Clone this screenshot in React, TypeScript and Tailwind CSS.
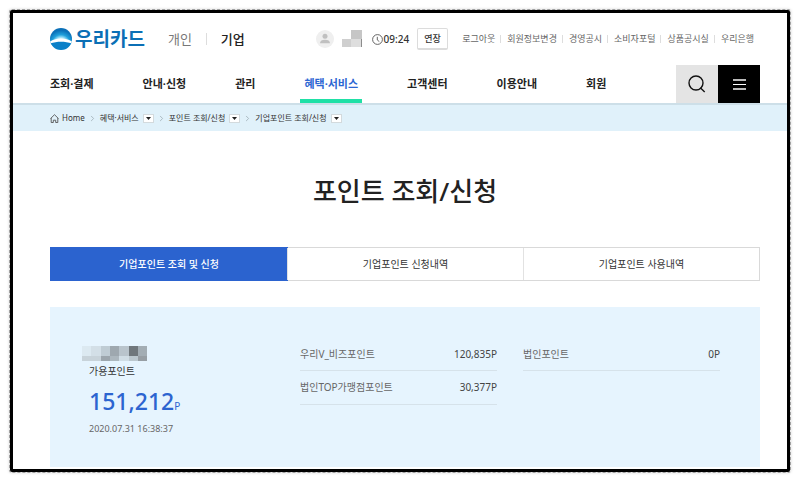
import { ChevronRight } from 'lucide-react';
import { clsx } from 'clsx';

const utilityLinks = ['로그아웃', '회원정보변경', '경영공시', '소비자포털', '상품공시실', '우리은행'];

const menus = ['조회·결제', '안내·신청', '관리', '혜택·서비스', '고객센터', '이용안내', '회원'];
const activeMenu = '혜택·서비스';

const crumbs = ['혜택·서비스', '포인트 조회/신청', '기업포인트 조회/신청'];

const tabs = ['기업포인트 조회 및 신청', '기업포인트 신청내역', '기업포인트 사용내역'];

const points = [
  [
    { name: '우리V_비즈포인트', value: '120,835P' },
    { name: '법인TOP가맹점포인트', value: '30,377P' },
  ],
  [{ name: '법인포인트', value: '0P' }],
];

// Masked company name, two rows of seven blocks
const maskRows = [
  ['#dce9f1', '#d3dfe7', '#bfccd4', '#9ea8af', '#b9c4cc', '#70777c', '#a3adb4'],
  ['#c8d3da', '#c8d3da', '#9ca6ad', '#acb7be', '#d0dde5', '#bcc8cf', '#979ea4'],
];

function Logo() {
  return (
    <a href="#" className="flex items-center gap-[3px]">
      <svg viewBox="0 0 22 22" className="size-[22px]" aria-hidden="true">
        <defs>
          <radialGradient id="sky" gradientUnits="userSpaceOnUse" cx="11" cy="16" r="16">
            <stop offset="0.25" stopColor="#ffffff" />
            <stop offset="0.4" stopColor="#a5e2f7" />
            <stop offset="0.58" stopColor="#1fa0dc" />
            <stop offset="0.85" stopColor="#0a70b8" />
          </radialGradient>
          <clipPath id="disc">
            <circle cx="11" cy="11" r="11" />
          </clipPath>
        </defs>
        <g clipPath="url(#disc)">
          <rect width="22" height="22" fill="url(#sky)" />
          <path d="M-1 15.6C3 13.4 7 12.9 11 12.9S19 13.4 23 15.6V23H-1z" fill="#0a80c8" />
          <path d="M0 13.4C4 11.2 7 10.4 11 10.4S18 11.2 22 13.4V15.6C18 14.2 15 13.8 11 13.8S4 14.2 0 15.6z" fill="#fff" />
        </g>
      </svg>
      <span className="text-[19px] leading-6 font-bold text-[#0b6fb5]">우리카드</span>
    </a>
  );
}

function Mask({ className }: { className?: string }) {
  return (
    <svg viewBox="0 0 65 15" className={className} shapeRendering="crispEdges" aria-hidden="true">
      {maskRows.map((row, y) =>
        row.map((color, x) => (
          <rect key={`${x}-${y}`} x={x * 9.3} y={y * 9.5} width="9.4" height={y ? 5.5 : 9.5} fill={color} />
        )),
      )}
    </svg>
  );
}

function TopBar() {
  return (
    <div className="flex h-[52px] items-center pr-[33px] pl-[37px]">
      <Logo />
      <div className="ml-[23px] flex items-center text-[13px] leading-5">
        <a href="#" className="text-[#777]">개인</a>
        <span className="mx-3.5 h-3 w-px bg-[#ddd]" />
        <a href="#" className="font-medium text-[#222]">기업</a>
      </div>
      <div className="ml-auto flex items-center">
        <svg viewBox="0 0 18 18" className="size-[18px]" aria-hidden="true">
          <circle cx="9" cy="9" r="9" fill="#efefef" />
          <circle cx="9" cy="6.3" r="2.5" fill="#c0c0c0" />
          <path d="M4 13.3C4 10.7 6 9.7 9 9.7s5 1 5 3.6z" fill="#c0c0c0" />
        </svg>
        <svg viewBox="0 0 20 18" className="ml-2 h-[18px] w-5" shapeRendering="crispEdges" aria-hidden="true">
          <rect x="9" y="0" width="11" height="9" fill="#c6c6c6" />
          <rect x="0" y="9" width="9" height="8" fill="#cfcfcf" />
          <rect x="9" y="9" width="10" height="8" fill="#dedede" />
          <rect x="19" y="9" width="1" height="8" fill="#8c8c8c" />
        </svg>
        <svg viewBox="0 0 11 11" className="ml-2.5 size-[11px]" fill="none" stroke="#555" strokeWidth="0.9" aria-hidden="true">
          <circle cx="5.5" cy="5.5" r="4.9" />
          <path d="M5.3 2.8V6l2 1.6" />
        </svg>
        <span className="ml-px text-[10px] leading-4 font-medium text-[#333]">09:24</span>
        <button className="ml-2 h-[22px] w-[31px] rounded-xs border border-b-2 border-[#dcdcdc] text-[9px] leading-4 font-medium text-[#333]">
          연장
        </button>
        <ul className="ml-3.5 flex items-center text-[9px] leading-4 text-[#666]">
          {utilityLinks.map((label, i) => (
            <li key={label} className="flex items-center">
              {i > 0 && <span className="mr-[6px] ml-[5px] h-2 w-px bg-[#ddd]" />}
              <a href="#">{label}</a>
            </li>
          ))}
        </ul>
      </div>
    </div>
  );
}

function MainNav() {
  return (
    <nav className="flex h-[38px] items-stretch justify-between pr-[27px] pl-[37px]">
      <ul className="flex gap-[49px] text-[11px] font-bold text-[#222]">
        {menus.map((label) => (
          <li key={label} className="relative flex items-center">
            <a href="#" className={clsx(label === activeMenu && 'text-[#2c66d2]')}>
              {label}
            </a>
            {label === activeMenu && <span className="absolute -inset-x-1 bottom-0 h-1 bg-[#20e0a6]" />}
          </li>
        ))}
      </ul>
      <div className="flex">
        <button aria-label="검색" className="flex w-[42px] items-center justify-center bg-[#e4e4e4]">
          <svg viewBox="0 0 18 18" className="size-[18px]" fill="none" stroke="#111" strokeWidth="1.4" aria-hidden="true">
            <circle cx="8" cy="8" r="7" />
            <path d="M12.3 12.8l4.4 4.2" />
          </svg>
        </button>
        <button aria-label="전체메뉴" className="flex w-[42px] items-center justify-center bg-black">
          <svg viewBox="0 0 13 11" className="h-[11px] w-[13px]" shapeRendering="crispEdges" aria-hidden="true">
            <path d="M0 0h13v2H0zM0 9h13v2H0z" fill="#bbb" />
            <path d="M0 5h13v1H0z" fill="#fff" />
          </svg>
        </button>
      </div>
    </nav>
  );
}

function Breadcrumb() {
  return (
    <div className="flex h-7 items-center border-t-2 border-[#cddfe8] bg-[#e0f1fa] pl-[37px] text-[8px] leading-4 text-[#333]">
      <a href="#" className="flex items-center gap-[3px]">
        <svg viewBox="0 0 9 9" className="size-[9px]" fill="none" stroke="#555" strokeWidth="0.9" aria-hidden="true">
          <path d="M0.5 4.6L4.5 0.7l4 3.9M1.2 4v4.5h2.1V6.2h2.4v2.3h2.1V4" />
        </svg>
        Home
      </a>
      {crumbs.map((label) => (
        <div key={label} className="flex items-center">
          <ChevronRight className="mx-[3px] size-[9px] text-[#9aa8b0]" strokeWidth={2} />
          <a href="#">{label}</a>
          <button aria-label={`${label} 하위메뉴`} className="ml-1 flex h-[9px] w-[11px] items-center justify-center border border-[#d3dadd] bg-white">
            <svg viewBox="0 0 5 3" className="h-[3px] w-[5px]" aria-hidden="true">
              <path d="M0 0h5L2.5 3z" fill="#222" />
            </svg>
          </button>
        </div>
      ))}
    </div>
  );
}

function PointSummary() {
  return (
    <section className="mt-[26px] flex bg-[#e6f4fe] pt-[39px] pr-10 pb-[30px] pl-8">
      <div className="w-[218px]">
        <Mask className="h-[15px] w-[65px]" />
        <div className="pl-[7px]">
          <p className="mt-0.5 text-[10px] leading-4 text-[#333]">가용포인트</p>
          <p className="mt-2 text-[23px] leading-7 font-medium text-[#2c64d0]">
            151,212<span className="text-[10px] font-normal">P</span>
          </p>
          <p className="mt-px text-[9px] leading-4 text-[#666]">2020.07.31 16:38:37</p>
        </div>
      </div>
      <div className="grid flex-1 grid-cols-2 gap-x-[26px]">
        {points.map((list, i) => (
          <dl key={i}>
            {list.map((point) => (
              <div
                key={point.name}
                className="flex justify-between border-b border-[#d6e2ea] pt-2 pb-[9px] text-[10px] leading-4 first:pt-0 first:pb-2"
              >
                <dt className="text-[#666]">{point.name}</dt>
                <dd className="text-[#444]">{point.value}</dd>
              </div>
            ))}
          </dl>
        ))}
      </div>
    </section>
  );
}

export default function App() {
  return (
    <div className="bg-white p-2.5 font-['Noto_Sans','Noto_Sans_CJK_KR',sans-serif]">
      <div className="rounded-xs border-[3px] border-black bg-white pb-0.5 shadow-[0_0_3px_1px_rgba(0,0,0,0.15)] outline-1 outline-dashed outline-black/30">
        <header>
          <TopBar />
          <MainNav />
          <Breadcrumb />
        </header>
        <main className="pr-[27px] pl-[37px]">
          <h1 className="mt-10 text-center text-[26px] leading-10 font-medium text-[#222]">포인트 조회/신청</h1>
          <div role="tablist" className="mt-9 grid h-[34px] grid-cols-3 border border-[#d9d9d9] text-[10px] text-[#333]">
            {tabs.map((label, i) => (
              <button
                key={label}
                role="tab"
                aria-selected={i === 0}
                className={clsx(
                  i === 0 ? '-m-px bg-[#2b63cf] font-medium text-white' : 'border-l border-[#e2e2e2]',
                )}
              >
                {label}
              </button>
            ))}
          </div>
          <PointSummary />
        </main>
      </div>
    </div>
  );
}
